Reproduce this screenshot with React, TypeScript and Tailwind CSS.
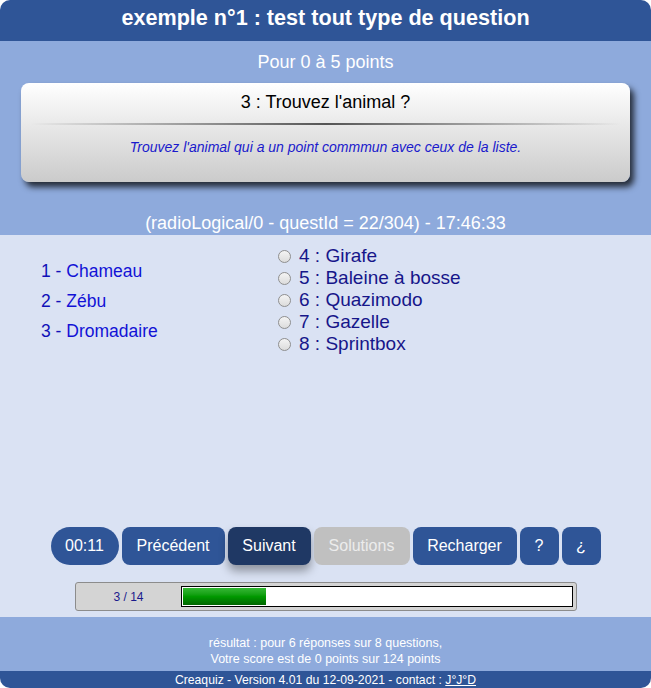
import React from "react";

const Radio = () => (
  <span className="inline-block w-[13px] h-[13px] rounded-full border border-[#8f8f8f] bg-gradient-to-b from-[#f4f4f4] to-[#dcdcdc] mr-[8px] shrink-0" />
);

export default function App() {
  const left = ["Chameau", "Zébu", "Dromadaire"];
  const right = ["4 : Girafe", "5 : Baleine à bosse", "6 : Quazimodo", "7 : Gazelle", "8 : Sprintbox"];
  return (
    <div className="w-[651px] h-[688px] bg-white" style={{ fontFamily: '"Liberation Sans", Arial, sans-serif' }}>
      <div className="w-[651px] h-[688px] flex flex-col rounded-[10px] overflow-hidden">
        <div className="h-[41px] bg-[#2f5597] flex items-center justify-center text-white font-bold text-[21.6px] pb-[4px]">
          exemple n°1 : test tout type de question
        </div>
        <div className="bg-[#8eaadc] h-[194px] flex flex-col items-center">
          <div className="text-white text-[18px] mt-[11px] leading-[20px]">Pour 0 à 5 points</div>
          <div className="mt-[11px] w-[609px] h-[99px] rounded-[8px] bg-gradient-to-b from-white to-[#cbcbcb] shadow-[4px_5px_6px_rgba(0,0,0,0.75)] flex flex-col items-center">
            <div className="text-black text-[18px] mt-[9px] leading-[20px]">3 : Trouvez l'animal ?</div>
            <div className="mt-[11px] h-[2px] w-[590px] bg-[linear-gradient(to_right,rgba(0,0,0,0),#555_50%,rgba(0,0,0,0))]" />
            <div className="mt-[14px] text-[#1a1acc] italic text-[14px] leading-[16px]">
              Trouvez l'animal qui a un point commmun avec ceux de la liste.
            </div>
          </div>
          <div className="text-white text-[18px] mt-[31px] leading-[20px]">(radioLogical/0 - questId = 22/304) - 17:46:33</div>
        </div>
        <div className="bg-[#dae2f3] h-[382px] flex flex-col">
          <div className="flex pt-[10px]">
            <div className="w-[278px] pl-[41px] pt-[16px] flex flex-col gap-[10px]">
              {left.map((t, i) => (
                <div key={t} className="text-[17.5px] leading-[20px] text-[#1212d6]">
                  <span className="text-[#1010b8]">{i + 1} - </span>
                  {t}
                </div>
              ))}
            </div>
            <div className="flex flex-col">
              {right.map((t) => (
                <div key={t} className="flex items-center h-[22px] text-[19px] text-[#16168a]">
                  <Radio />
                  {t}
                </div>
              ))}
            </div>
          </div>
          <div className="flex-1" />
          <div className="flex justify-center gap-[3px]">
            <div className="w-[68px] h-[38px] rounded-full bg-[#2f5597] text-white text-[16px] flex items-center justify-center">00:11</div>
            <div className="w-[103px] h-[38px] rounded-[8px] bg-[#2f5597] text-white text-[16px] flex items-center justify-center">Précédent</div>
            <div className="w-[83px] h-[38px] rounded-[8px] bg-[#1f3864] text-white text-[16px] flex items-center justify-center shadow-[0_6px_10px_rgba(0,0,0,0.35)]">Suivant</div>
            <div className="w-[96px] h-[38px] rounded-[8px] bg-[#c0c0c0] text-[#ececec] text-[16px] flex items-center justify-center">Solutions</div>
            <div className="w-[104px] h-[38px] rounded-[8px] bg-[#2f5597] text-white text-[16px] flex items-center justify-center">Recharger</div>
            <div className="w-[39px] h-[38px] rounded-[8px] bg-[#2f5597] text-white text-[16px] flex items-center justify-center">?</div>
            <div className="w-[39px] h-[38px] rounded-[8px] bg-[#2f5597] text-white text-[16px] flex items-center justify-center">¿</div>
          </div>
          <div className="mt-[17px] mb-[6px] ml-[75px] w-[502px] h-[29px] bg-[#d4d4d4] border border-[#8c8c8c] rounded-[3px] flex items-center">
            <div className="w-[105px] text-center text-[12px] text-[#1a1a8c]">3 / 14</div>
            <div className="w-[392px] h-[21px] bg-white border border-black p-[1px]">
              <div className="w-[83px] h-full bg-gradient-to-b from-[#33b833] via-[#009900] to-[#006600]" />
            </div>
          </div>
        </div>
        <div className="bg-[#8eaadc] h-[54px] flex flex-col items-center justify-end pb-[4px] text-white text-[12.5px] leading-[16px]">
          <div>résultat : pour 6 réponses sur 8 questions,</div>
          <div>Votre score est de 0 points sur 124 points</div>
        </div>
        <div className="bg-[#2f5597] h-[17px] flex items-center justify-center text-white text-[12.2px] leading-[16px]">
          Creaquiz - Version 4.01 du 12-09-2021 - contact :&nbsp;<span className="underline">J°J°D</span>
        </div>
      </div>
    </div>
  );
}
